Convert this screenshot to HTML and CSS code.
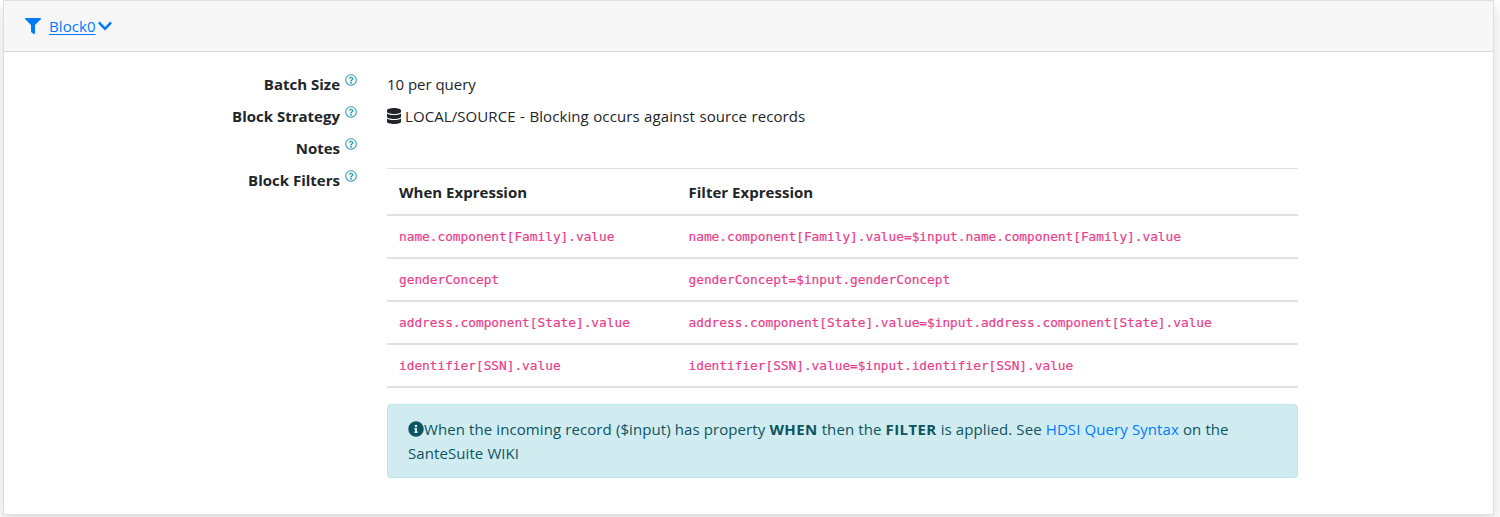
FILE: index.html
```html
<!DOCTYPE html>
<html lang="en">
<head>
<meta charset="utf-8">
<title>Block0</title>
<link rel="stylesheet" href="styles.css">
</head>
<body>
<svg class="defs" aria-hidden="true">
  <symbol id="help" viewBox="0 0 512 512"><path d="M256 8C119 8 8 119 8 256s111 248 248 248 248-111 248-248S393 8 256 8zm0 448c-110.500 0-200-89.400-200-200 0-110.500 89.500-200 200-200 110.500 0 200 89.500 200 200 0 110.500-89.400 200-200 200zm107.200-255.200c0 67-72.400 68.100-72.400 92.900V300c0 6.600-5.400 12-12 12h-45.600c-6.600 0-12-5.400-12-12v-8.700c0-35.700 27.100-50 47.600-61.500 17.600-9.800 28.300-16.500 28.300-29.500 0-17.200-22-28.700-39.800-28.700-23.200 0-33.900 11-48.900 30-4.100 5.100-11.500 6.100-16.700 2.100l-27.800-21.100c-5.100-3.900-6.300-11.100-2.600-16.400C184.800 131.500 214.900 112 261.800 112c49.100 0 101.500 38.300 101.500 88.800zM298 368c0 23.200-18.800 42-42 42s-42-18.800-42-42 18.800-42 42-42 42 18.800 42 42z"/></symbol>
</svg>
<section class="card">
  <header class="card-header">
    <svg class="icon filter" viewBox="0 0 512 512"><path d="M488 0H24C2.700 0-8 25.900 7 41l185 185v206c0 8 4 15 10 20l80 56c16 11 38 0 38-20V226L505 41c15-15 4.300-41-17-41z"/></svg>
    <a class="title" href="#">Block0</a>
    <svg class="icon chevron" viewBox="0 0 448 512"><path d="M207 382 13 187c-9-9-9-24 0-34l23-22c9-10 24-10 34 0l154 154 154-154c10-10 25-10 34 0l23 22c9 10 9 25 0 34L241 382c-10 9-25 9-34 0z"/></svg>
  </header>
  <dl class="details">
    <dt><span>Batch Size</span><svg class="help"><use href="#help"/></svg></dt>
    <dd class="batch">10 per query</dd>
    <dt><span>Block Strategy</span><svg class="help"><use href="#help"/></svg></dt>
    <dd class="strategy"><svg class="icon database" viewBox="0 0 448 512"><path d="M448 73v46c0 40-100 73-224 73S0 159 0 119V73C0 33 100 0 224 0s224 33 224 73zM448 176v103c0 40-100 73-224 73S0 319 0 279V176c48 33 136 48 224 48s176-15 224-48zm0 160v103c0 40-100 73-224 73S0 479 0 439V336c48 33 136 48 224 48s176-15 224-48z"/></svg><span>LOCAL/SOURCE - Blocking occurs against source records</span></dd>
    <dt><span>Notes</span><svg class="help"><use href="#help"/></svg></dt>
    <dd></dd>
    <dt><span>Block Filters</span><svg class="help"><use href="#help"/></svg></dt>
    <dd class="filters">
      <table>
        <thead><tr><th>When Expression</th><th>Filter Expression</th></tr></thead>
        <tbody>
          <tr><td>name.component[Family].value</td><td>name.component[Family].value=$input.name.component[Family].value</td></tr>
          <tr><td>genderConcept</td><td>genderConcept=$input.genderConcept</td></tr>
          <tr><td>address.component[State].value</td><td>address.component[State].value=$input.address.component[State].value</td></tr>
          <tr><td>identifier[SSN].value</td><td>identifier[SSN].value=$input.identifier[SSN].value</td></tr>
        </tbody>
      </table>
      <div class="alert"><svg class="icon info" viewBox="0 0 512 512"><path fill-rule="evenodd" d="M256 8a248 248 0 1 0 0 496 248 248 0 0 0 0-496zm0 110a42 42 0 1 1 0 84 42 42 0 0 1 0-84zm56 254c0 7-5 12-12 12h-88c-7 0-12-5-12-12v-24c0-7 5-12 12-12h12v-64h-12c-7 0-12-5-12-12v-24c0-7 5-12 12-12h64c7 0 12 5 12 12v100h12c7 0 12 5 12 12z"/></svg>When the incoming record ($input) has property <b>WHEN</b> then the <b>FILTER</b> is applied. See <a href="#">HDSI Query Syntax</a> on the<br>SanteSuite WIKI</div>
    </dd>
  </dl>
</section>
</body>
</html>
```
FILE: styles.css
```css
* { box-sizing: border-box; }
body {
  margin: 0;
  padding: 0 6px 0 3px;
  height: 517px;
  overflow: hidden;
  background: #fff;
  color: #212529;
  font: 15px/24px "Open Sans", "Noto Sans", sans-serif;
}
.defs { position: absolute; width: 0; height: 0; }
.icon { fill: currentColor; flex: none; }
.card {
  height: 515px;
  border: 1px solid #dfdfdf;
  background: #fff;
  box-shadow: 0 8px 16px rgba(0, 0, 0, .15);
}
.card-header {
  display: flex;
  align-items: center;
  height: 51px;
  padding-left: 21px;
  background: #f7f7f7;
  border-bottom: 1px solid #d8d8d8;
  color: #007bff;
}
.filter { width: 16px; height: 16px; }
.title {
  margin: 0 2px 0 8px;
  color: #007bff;
  letter-spacing: .08px;
  text-decoration-thickness: 1px;
  text-underline-offset: 2px;
}
.chevron { width: 14px; height: 16px; }
.details {
  display: grid;
  grid-template-columns: 353px 911px;
  column-gap: 30px;
  row-gap: 8px;
  margin: 20px 0 0;
}
dt {
  display: flex;
  justify-content: flex-end;
  gap: 5px;
  height: 24px;
  font-weight: 700;
  letter-spacing: 0;
}
.help { width: 12px; height: 12px; margin-top: 2px; fill: #3a9db8; }
dd {
  display: flex;
  align-items: center;
  margin: 0;
  height: 24px;
  letter-spacing: .08px;
}
.batch { letter-spacing: -.03px; }
.strategy { word-spacing: .5px; }
.database { width: 14px; height: 16px; margin-right: 4px; }
.filters { display: block; height: auto; }
table {
  width: 100%;
  margin-bottom: 16px;
  border-collapse: separate;
  border-spacing: 0;
  table-layout: fixed;
}
th, td { padding: 0 12px; text-align: left; }
th:first-child { width: 289.5px; }
th {
  height: 48px;
  border-top: 1px solid #dee2e6;
  border-bottom: 2px solid #dee2e6;
  letter-spacing: .02px;
}
td {
  height: 43px;
  border-bottom: 2px solid #dee2e6;
  color: #e83e8c;
  font: 12.8px/20px "DejaVu Sans Mono", monospace;
  letter-spacing: -.01px;
  white-space: nowrap;
  -webkit-text-stroke: .2px #e83e8c;
}
.alert {
  height: 74px;
  padding: 12px 20px;
  border: 1px solid #bee5eb;
  border-radius: 4px;
  background: #d1ecf1;
  color: #0c5460;
  word-spacing: .1px;
  white-space: nowrap;
}
.info { width: 16px; height: 16px; vertical-align: -2px; }
.alert b { letter-spacing: .4px; }
.alert a { color: #007bff; text-decoration: none; }
```
